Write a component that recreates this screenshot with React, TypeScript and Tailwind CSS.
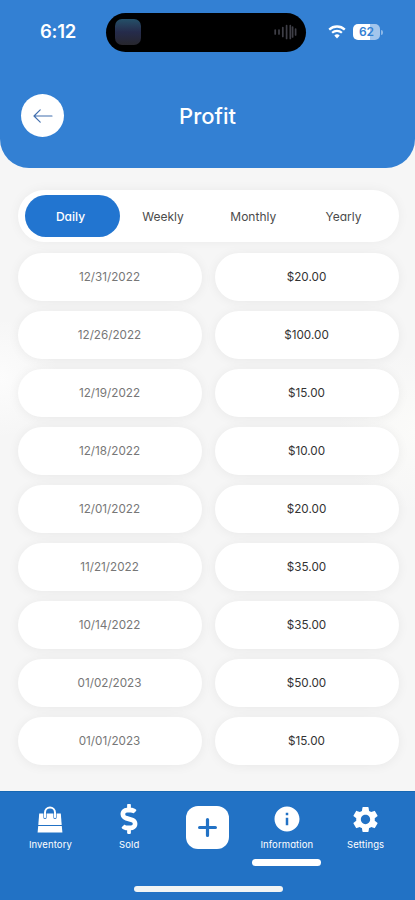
import React from 'react';
import { FaDollarSign } from 'react-icons/fa';
import { MdInfo, MdSettings } from 'react-icons/md';

const tabs = ['Daily', 'Weekly', 'Monthly', 'Yearly'];

const profits = [
  { date: '12/31/2022', amount: '$20.00' },
  { date: '12/26/2022', amount: '$100.00' },
  { date: '12/19/2022', amount: '$15.00' },
  { date: '12/18/2022', amount: '$10.00' },
  { date: '12/01/2022', amount: '$20.00' },
  { date: '11/21/2022', amount: '$35.00' },
  { date: '10/14/2022', amount: '$35.00' },
  { date: '01/02/2023', amount: '$50.00' },
  { date: '01/01/2023', amount: '$15.00' },
];

const WifiIcon = () => (
  <svg width="18" height="14" viewBox="0 0 18 14" fill="none">
    <path d="M1.2 4.6a11.4 11.4 0 0 1 15.6 0" stroke="white" strokeWidth="2.3" />
    <path d="M4.1 7.7a7.2 7.2 0 0 1 9.8 0" stroke="white" strokeWidth="2.2" />
    <path d="M9 13.4 6.3 10.6a3.9 3.9 0 0 1 5.4 0Z" fill="white" />
  </svg>
);

const SoundWave = () => (
  <svg width="23" height="16" viewBox="0 0 23 16" stroke="#3f3f47" strokeWidth="1.7" strokeLinecap="round">
    <path d="M1.2 6v4M5 6v4M8.8 3.5v9M12.6 1.5v13M16.3 1.5v13M18.6 3v10M21.6 5v6" />
  </svg>
);

const BagIcon = () => (
  <svg width="26" height="27" viewBox="0 0 26 27" fill="none">
    <path d="M2.2 7.6h21.6l.9 11.4H1.3Z" fill="white" />
    <path d="M1.2 20h23.6l.6 6.6H.6Z" fill="white" />
    <path d="M8 11.5V7a5 5 0 0 1 10 0v4.5" stroke="#2272c5" strokeWidth="3.2" strokeLinecap="round" />
    <path d="M8 11.2V6.4a5 5 0 0 1 10 0v4.8" stroke="white" strokeWidth="2" strokeLinecap="round" />
  </svg>
);

const StatusBar = () => (
  <div className="flex h-[64px] items-center pl-[40px] pr-[31px]">
    <span className="w-[66px] text-[18.5px] font-semibold tracking-[-0.3px]">6:12</span>
    <div className="flex h-[39px] w-[199.5px] shrink-0 items-center justify-between rounded-full bg-black pr-[9px] pl-[9px]">
      <div className="h-[26px] w-[26px] rounded-[7px] bg-linear-to-b from-[#235069] via-[#252b4b] to-[#27262d]" />
      <SoundWave />
    </div>
    <div className="ml-[22.5px]">
      <WifiIcon />
    </div>
    <div className="ml-[7px] flex h-[16px] w-[27px] shrink-0 items-center justify-center rounded-[5px] bg-linear-to-r from-white from-62% to-[#a3c5ec] to-62% text-[12px] font-semibold tracking-[-0.1px] text-[#3380d3]">
      62
    </div>
    <div className="ml-px h-[5px] w-[2px] shrink-0 rounded-r-full bg-[#8db8e8]" />
  </div>
);

const Header = () => (
  <header className="h-[168px] rounded-b-[29px] bg-[#3380d3] text-white">
    <StatusBar />
    <div className="grid h-[103px] grid-cols-[43px_1fr_43px] items-center px-[21px]">
      <button className="flex h-[43px] w-[43px] items-center justify-center rounded-full bg-white">
        <svg width="20" height="14" viewBox="0 0 20 14" fill="none" stroke="#416eae" strokeWidth="1.15" strokeLinecap="round" strokeLinejoin="round">
          <path d="M19 7H1M7.2 .8 1 7l6.2 6.2" />
        </svg>
      </button>
      <h1 className="pt-[2px] text-center text-[22px] font-medium">Profit</h1>
    </div>
  </header>
);

const Tabs = () => (
  <div className="flex h-[52px] items-center rounded-full bg-white pr-[8px] pl-[7.5px] shadow-[0_0_12px_rgba(0,0,0,0.05)]">
    {tabs.map((tab, i) => (
      <button
        key={tab}
        className={
          i === 0
            ? 'h-[42px] w-[95px] shrink-0 rounded-full bg-[#2275d0] pt-px pr-[4px] text-[12px] font-medium text-white'
            : 'h-[42px] flex-1 pt-px pr-[4px] text-[12px] text-[#4b4b4b]'
        }
      >
        {tab}
      </button>
    ))}
  </div>
);

const NavLabel = ({ children }: { children: React.ReactNode }) => (
  <span className="text-[9.5px] leading-[12px] tracking-[0.1px]">{children}</span>
);

const BottomNav = () => (
  <nav className="h-[109px] border-t border-[#1768b3] bg-[#2272c5] pr-[10px] pl-[11px] text-white">
    <div className="grid h-[94px] grid-cols-5 pt-[14px]">
      <div className="flex flex-col items-center">
        <div className="flex h-[33px] items-start"><BagIcon /></div>
        <NavLabel>Inventory</NavLabel>
      </div>
      <div className="flex flex-col items-center">
        <div className="-mt-[2px] flex h-[35px] items-start"><FaDollarSign className="h-[30px] w-[30px]" /></div>
        <NavLabel>Sold</NavLabel>
      </div>
      <div className="flex flex-col items-center">
        <div className="flex h-[43px] w-[43px] items-center justify-center rounded-[12px] bg-white">
          <svg width="19" height="19" viewBox="0 0 19 19" stroke="#2272c5" strokeWidth="3.2" strokeLinecap="round">
            <path d="M9.5 1.6v15.8M1.6 9.5h15.8" />
          </svg>
        </div>
      </div>
      <div className="flex flex-col items-center">
        <div className="-mt-[2px] flex h-[35px] items-start"><MdInfo className="h-[30px] w-[30px]" /></div>
        <NavLabel>Information</NavLabel>
        <div className="mt-[8px] h-[7px] w-[69px] rounded-full bg-white" />
      </div>
      <div className="flex flex-col items-center">
        <div className="-mt-[2px] flex h-[35px] items-start"><MdSettings className="h-[31px] w-[31px]" /></div>
        <NavLabel>Settings</NavLabel>
      </div>
    </div>
    <div className="mx-auto h-[6px] w-[149px] rounded-full bg-[#f1f4f4]" />
  </nav>
);

const App = () => {
  return (
    <div className="flex h-[900px] w-[415px] flex-col overflow-hidden bg-[#f6f6f6] bg-[radial-gradient(circle_at_0%_42%,#fcfcfc_0,transparent_60px),radial-gradient(circle_at_100%_48%,#fbfbf9_0,transparent_80px)] font-['Inter','Liberation_Sans',sans-serif] [font-feature-settings:'cv11'_1]">
      <Header />
      <main className="flex flex-1 flex-col gap-[11px] pt-[22px] pr-[16.5px] pl-[17.5px]">
        <Tabs />
        <div className="grid grid-cols-2 gap-x-[13px] gap-y-[10.5px]">
          {profits.map(profit => (
            <React.Fragment key={profit.date}>
              <div className="flex h-[47.5px] items-center justify-center rounded-full bg-white pt-[2px] text-[11.7px] text-[#777777] shadow-[0_1px_12px_rgba(0,0,0,0.06)]">
                {profit.date}
              </div>
              <div className="flex h-[47.5px] items-center justify-center rounded-full bg-white pt-[2px] text-[11.7px] text-[#333333] shadow-[0_1px_12px_rgba(0,0,0,0.06)]">
                {profit.amount}
              </div>
            </React.Fragment>
          ))}
        </div>
      </main>
      <BottomNav />
    </div>
  );
};

export default App;
